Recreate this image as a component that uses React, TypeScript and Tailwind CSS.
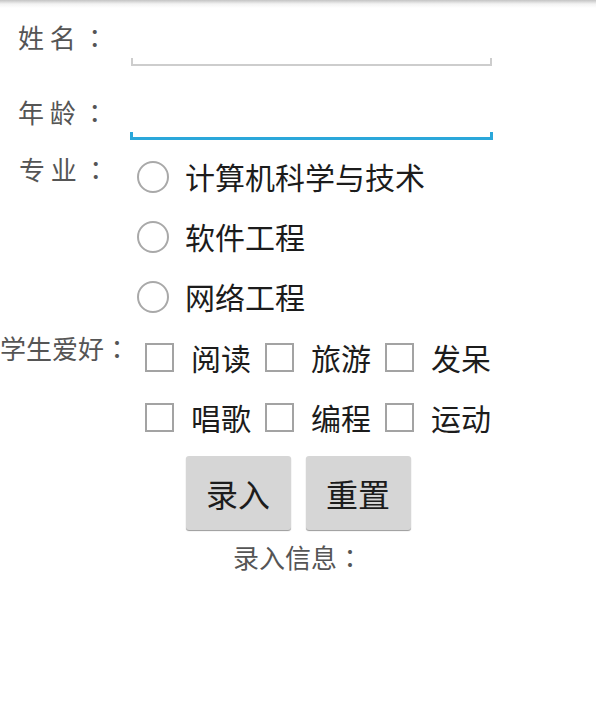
import React from 'react';

const majors = ['计算机科学与技术', '软件工程', '网络工程'];
const hobbies = [
  ['阅读', '旅游', '发呆'],
  ['唱歌', '编程', '运动'],
];

// centred full-width colon, as on the device
const Colon = () => <span className="font-['Noto_Sans_CJK_TC',sans-serif]">：</span>;

const Radio = ({ label }: { label: string }) => (
  <div className="flex items-center h-[60px] pl-[6px]">
    <span className="w-[32px] h-[32px] rounded-full border-2 border-[#a9a9a9] bg-white" />
    <span className="ml-[16px] text-[30px] leading-[30px] text-[#1c1c1c] -mt-[2px]">{label}</span>
  </div>
);

const Check = ({ label }: { label: string }) => (
  <div className="flex items-center w-[120px]">
    <span className="w-[29px] h-[29px] border-2 border-[#a3a3a3] bg-white" />
    <span className="ml-[17px] text-[30px] leading-[30px] text-[#1c1c1c]">{label}</span>
  </div>
);

export default function App() {
  return (
    <div className="w-[596px] h-[701px] bg-white font-['Noto_Sans_CJK_SC',sans-serif] overflow-hidden">
      {/* status bar shadow */}
      <div className="h-[8px] bg-gradient-to-b from-[#c4c4c4] via-[#f3f3f3] to-white" />

      {/* 姓名 */}
      <div className="flex h-[58px]">
        <div className="w-[131px] pl-[18px] pt-[16px] text-[26px] leading-[26px] text-[#555]">姓 名 <Colon /></div>
        <div className="flex flex-col justify-end w-[361px]">
          <div className="h-[8px] border-x-2 border-b-2 border-[#cdcdcd]" />
        </div>
      </div>

      {/* 年龄 */}
      <div className="flex h-[74px]">
        <div className="w-[130px] pl-[18px] pt-[33px] text-[26px] leading-[26px] text-[#555]">年 龄 <Colon /></div>
        <div className="flex flex-col justify-end w-[363px]">
          <div className="h-[8px] border-x-[3px] border-b-[3px] border-[#2aa7da]" />
        </div>
      </div>

      {/* 专业 */}
      <div className="flex mt-[7px]">
        <div className="w-[131px] pl-[19px] pt-[9px] text-[26px] leading-[26px] text-[#555]">专 业 <Colon /></div>
        <div className="flex flex-col">
          {majors.map((m) => (
            <Radio key={m} label={m} />
          ))}
        </div>
      </div>

      {/* 学生爱好 */}
      <div className="flex">
        <div className="w-[145px] pt-[8px] text-[26px] leading-[26px] text-[#555]">学生爱好<Colon /></div>
        <div className="flex flex-col">
          {hobbies.map((row, i) => (
            <div key={i} className="flex items-center h-[60px]">
              {row.map((h) => (
                <Check key={h} label={h} />
              ))}
            </div>
          ))}
        </div>
      </div>

      {/* buttons */}
      <div className="flex justify-center gap-[15px] mt-[9px]">
        <button className="w-[105px] h-[74px] rounded-[3px] bg-[#d6d6d6] shadow-[0_1px_1px_#9a9a9a] text-[32px] leading-[32px] text-[#1c1c1c]">录入</button>
        <button className="w-[105px] h-[74px] rounded-[3px] bg-[#d6d6d6] shadow-[0_1px_1px_#9a9a9a] text-[32px] leading-[32px] text-[#1c1c1c]">重置</button>
      </div>

      <div className="mt-[14px] text-center text-[26px] leading-[26px] text-[#555]">录入信息<Colon /></div>
    </div>
  );
}
